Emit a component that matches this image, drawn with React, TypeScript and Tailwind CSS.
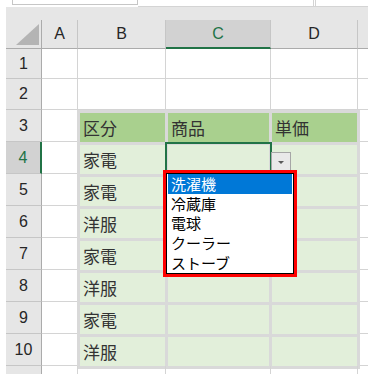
import React from "react";

const cols = ["A", "B", "C", "D"];
const rows = [
  { label: "区分", goods: "商品", price: "単価", head: true },
  { label: "家電" },
  { label: "家電" },
  { label: "洋服" },
  { label: "家電" },
  { label: "洋服" },
  { label: "家電" },
  { label: "洋服" },
];
const options = ["洗濯機", "冷蔵庫", "電球", "クーラー", "ストーブ"];

const jp = { fontFamily: '"Noto Sans CJK JP", "Noto Sans", sans-serif' };
const latin = { fontFamily: '"Liberation Sans", Arial, sans-serif' };

// Listbox opened from the dropdown of the active cell, marked with a red frame
const DropdownList = () => (
  <div className="absolute left-[-5px] top-[25px] z-20 w-[134px] border-[3px] border-[#ff0000]">
    <div className="h-[101px] overflow-hidden border border-black bg-white px-px">
      {options.map((opt, i) => (
        <div
          key={opt}
          className={`flex h-[19.6px] items-center pl-[3px] text-[15px] leading-none ${
            i === 0 ? "bg-[#0078d7] text-white" : "text-black"
          }`}
          style={jp}
        >
          {opt}
        </div>
      ))}
    </div>
  </div>
);

const ActiveCell = () => (
  <div className="relative bg-[#e2efda]">
    <div className="absolute -inset-[3px] z-10 border-2 border-[#217346]" />
    {/* dropdown arrow button */}
    <div className="absolute left-[103px] top-[7px] z-10 flex h-[20px] w-[20px] items-center justify-center border border-[#a6a6a6] bg-[#e9e9e9]">
      <div className="h-0 w-0 border-x-[3px] border-t-[3px] border-x-transparent border-t-[#595959]" />
    </div>
    <DropdownList />
  </div>
);

const DataTable = () => (
  <div className="col-start-3 col-end-6 row-start-5 row-end-13 -mb-[3px] -ml-px -mr-[2px] grid grid-cols-[85px_101px_85px] grid-rows-[repeat(8,29px)] gap-[3px] bg-[#d9d9d9] p-[3px]">
    {rows.map((r, i) =>
      r.head ? (
        <React.Fragment key={i}>
          <div className="flex items-center bg-[#a9d08e] px-[3px] text-[17px] text-[#333]" style={jp}>{r.label}</div>
          <div className="flex items-center bg-[#a9d08e] px-[3px] text-[17px] text-[#333]" style={jp}>{r.goods}</div>
          <div className="flex items-center bg-[#a9d08e] px-[3px] text-[17px] text-[#333]" style={jp}>{r.price}</div>
        </React.Fragment>
      ) : (
        <React.Fragment key={i}>
          <div className="flex items-center bg-[#e2efda] px-[3px] text-[17px] text-[#333]" style={jp}>{r.label}</div>
          {i === 1 ? <ActiveCell /> : <div className="bg-[#e2efda]" />}
          <div className="bg-[#e2efda]" />
        </React.Fragment>
      ),
    )}
  </div>
);

export default function App() {
  const rowHeights = [30, 31, 32, 32, 32, 32, 32, 32, 32, 32];

  return (
    <div className="h-[374px] w-[373px] overflow-hidden bg-white">
      {/* formula bar remnant */}
      <div className="flex h-[7px]">
        <div className="w-[12px]" />
        <div className="h-[5px] w-[126px] border-x border-b border-[#c6c6c6]" />
        <div className="flex h-[7px] w-[230px] border-b border-[#d4d4d4]">
          <div className="ml-[175px] h-[6px] w-[3px] border-x border-[#d4d4d4]" />
        </div>
      </div>

      <div className="flex">
        <div className="w-[6px]" />
        <div className="grid grid-cols-[36px_36px_88px_105px_87px_10px] grid-rows-[13px_29px_30px_31px_repeat(8,32px)_8px]">
          {/* gray band above headers */}
          <div className="col-span-6 bg-[#e6e6e6]" />

          {/* corner + column headers */}
          <div className="flex items-end justify-end border-b border-r border-[#ababab] bg-[#e6e6e6] pb-[3px] pr-[2px]">
            <div className="h-0 w-0 border-b-[21px] border-l-[23px] border-b-[#b4b4b4] border-l-transparent" />
          </div>
          {cols.map((c) => (
            <div
              key={c}
              className={`flex items-center justify-center text-[16px] ${
                c === "C"
                  ? "border-b-2 border-r border-b-[#217346] border-r-[#c6c6c6] bg-[#d2d2d2] text-[#217346]"
                  : "border-b border-r border-b-[#ababab] border-r-[#c6c6c6] bg-[#e6e6e6] text-[#262626]"
              }`}
              style={latin}
            >
              {c}
            </div>
          ))}
          <div className="border-b border-[#ababab] bg-[#e6e6e6]" />

          {/* rows */}
          {rowHeights.map((_, i) => {
            const n = i + 1;
            const selected = n === 4;
            return (
              <React.Fragment key={n}>
                <div
                  className={`flex items-center justify-center border-b border-b-[#c6c6c6] text-[16px] ${
                    selected
                      ? "border-r-2 border-r-[#217346] bg-[#d2d2d2] text-[#217346]"
                      : "border-r border-r-[#ababab] bg-[#e6e6e6] text-[#262626]"
                  }`}
                  style={latin}
                >
                  {n}
                </div>
                <div className="border-b border-r border-[#d4d4d4]" />
                {n <= 2 && (
                  <>
                    <div className="border-b border-r border-[#d4d4d4]" />
                    <div className="border-b border-r border-[#d4d4d4]" />
                    <div className="border-b border-r border-[#d4d4d4]" />
                  </>
                )}
                <div className="border-b border-[#d4d4d4]" />
              </React.Fragment>
            );
          })}

          <DataTable />

          {/* partial row 11 */}
          <div className="border-r border-[#ababab] bg-[#e6e6e6]" />
          <div className="border-r border-[#d4d4d4]" />
          <div className="border-r border-[#d4d4d4]" />
          <div className="border-r border-[#d4d4d4]" />
          <div className="border-r border-[#d4d4d4]" />
          <div />
        </div>
      </div>
    </div>
  );
}
